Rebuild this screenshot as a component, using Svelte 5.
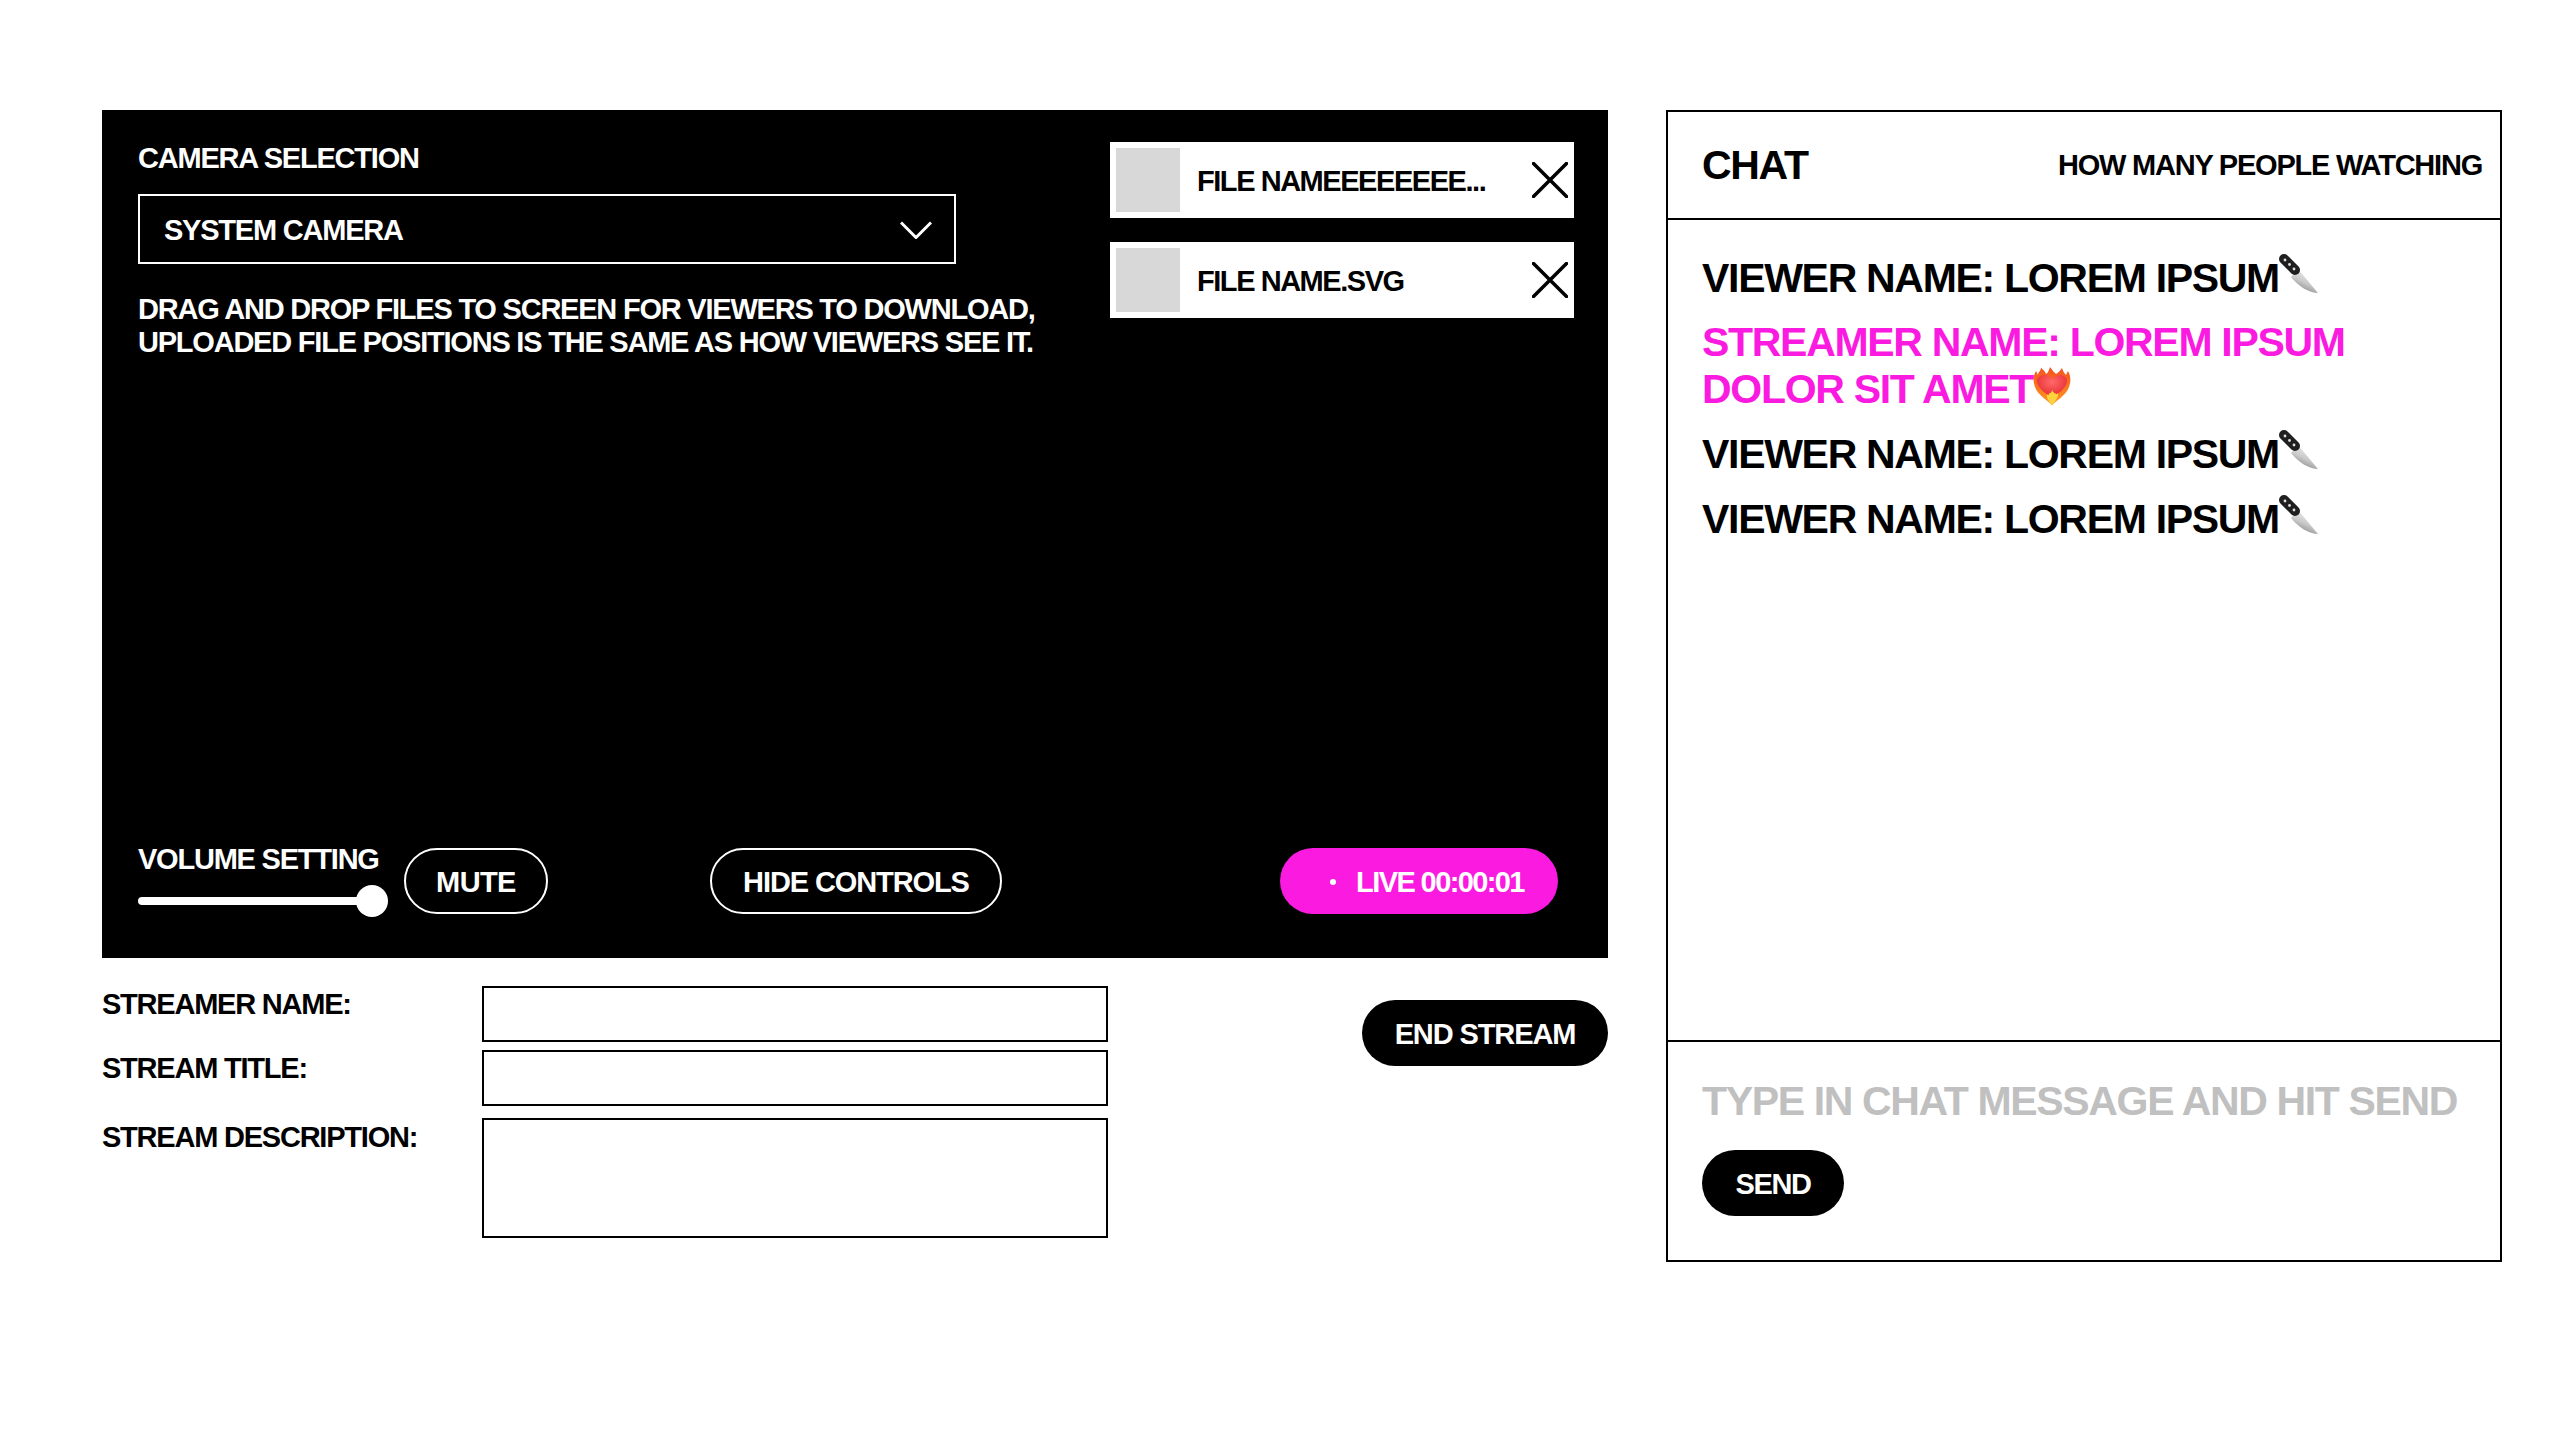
<script>
  const messages = [
    { name: 'VIEWER NAME', text: 'LOREM IPSUM', emoji: 'knife' },
    { name: 'STREAMER NAME', text: 'LOREM IPSUM DOLOR SIT AMET', emoji: 'heart', streamer: true },
    { name: 'VIEWER NAME', text: 'LOREM IPSUM', emoji: 'knife' },
    { name: 'VIEWER NAME', text: 'LOREM IPSUM', emoji: 'knife' }
  ];
  const files = ['FILE NAMEEEEEEEE...', 'FILE NAME.SVG'];
</script>

<div class="page">
  <div class="left">
    <section class="stage">
      <div class="top">
        <div class="camera">
          <div class="label">CAMERA SELECTION</div>
          <div class="select">
            <span>SYSTEM CAMERA</span>
            <svg class="chevron" width="32" height="18" viewBox="0 0 32 18">
              <path d="M1 1.5 16 16.5 31 1.5" fill="none" stroke="#fff" stroke-width="3" />
            </svg>
          </div>
          <p class="hint">
            DRAG AND DROP FILES TO SCREEN FOR VIEWERS TO DOWNLOAD,<br />
            UPLOADED FILE POSITIONS IS THE SAME AS HOW VIEWERS SEE IT.
          </p>
        </div>
        <ul class="files">
          {#each files as file}
            <li class="file">
              <div class="thumb"></div>
              <span class="file-name">{file}</span>
              <svg class="close" width="36" height="36" viewBox="0 0 36 36">
                <path d="M1.5 1.5 34.5 34.5M34.5 1.5 1.5 34.5" stroke="#000" stroke-width="3.5" stroke-linecap="round" />
              </svg>
            </li>
          {/each}
        </ul>
      </div>

      <div class="controls">
        <div class="volume">
          <div class="label">VOLUME SETTING</div>
          <div class="slider"><div class="knob"></div></div>
        </div>
        <button class="pill outline mute">MUTE</button>
        <button class="pill outline hide">HIDE CONTROLS</button>
        <button class="pill live"><i class="dot"></i>LIVE 00:00:01</button>
      </div>
    </section>

    <div class="details">
      <div class="form">
        <label for="streamer">STREAMER NAME:</label>
        <input id="streamer" />
        <label for="title">STREAM TITLE:</label>
        <input id="title" />
        <label class="tall" for="description">STREAM DESCRIPTION:</label>
        <textarea id="description"></textarea>
      </div>
      <button class="pill solid end">END STREAM</button>
    </div>
  </div>

  <aside class="chat">
    <header class="chat-head">
      <h2>CHAT</h2>
      <span class="watching">HOW MANY PEOPLE WATCHING</span>
    </header>
    <div class="messages">
      {#each messages as m}
        <p class="message" class:streamer={m.streamer}>
          {m.name}: {m.text}{#if m.emoji === 'knife'}<svg class="emoji knife" width="40" height="40" viewBox="0 0 40 40">
              <defs>
                <linearGradient id="blade" x1="0.7" y1="0.1" x2="0.3" y2="0.9">
                  <stop offset="0" stop-color="#f0f0f0" />
                  <stop offset="0.55" stop-color="#c9c9c9" />
                  <stop offset="1" stop-color="#8d8d8d" />
                </linearGradient>
              </defs>
              <path d="M12 23 19 15 39 39C30 39 19 32 12 23Z" fill="url(#blade)" />
              <path d="M5 5 16 16" stroke="#1f1f1f" stroke-width="10" stroke-linecap="round" />
              <circle cx="6" cy="6" r="1.4" fill="#ddd" />
              <circle cx="10.5" cy="10.5" r="1.4" fill="#ddd" />
              <circle cx="15" cy="15" r="1.4" fill="#ddd" />
            </svg>{:else}<svg class="emoji heart" width="38" height="40" viewBox="0 0 38 40">
              <defs>
                <linearGradient id="flame" x1="0" y1="0" x2="0" y2="1">
                  <stop offset="0" stop-color="#f4511e" />
                  <stop offset="1" stop-color="#ff9a1f" />
                </linearGradient>
                <radialGradient id="love" cx="0.5" cy="0.3" r="0.7">
                  <stop offset="0" stop-color="#ff6a6a" />
                  <stop offset="1" stop-color="#e5262c" />
                </radialGradient>
              </defs>
              <path d="M19 39.5C16 35 5 30 2 21 0 15 0 10 3 5L5 9C5 6 8 5 8 1.5 10 4 12 5 13 8 15 7 16 4 17 1 19 4 21 6 23 8 25 7 27 5 29 2 30 5 31 7 33 9L35 5C38 10 38 16 36 21 33 30 22 35 19 39.5Z" fill="url(#flame)" />
              <path d="M19 32C14 28 5 23 4 16 3 11 8 9 12 9 15 9 18 11 19 13 20 11 23 9 26 9 30 9 35 11 34 16 33 23 24 28 19 32Z" fill="url(#love)" />
              <path d="M19 39.5C17 36 13 33 14 28 15 30 16 29 16 27 18 28 19 25 19 24 20 26 22 28 22 27 24 29 24 28 25 27 26 32 21 36 19 39.5Z" fill="#ffd23f" />
            </svg>{/if}
        </p>
      {/each}
    </div>
    <div class="composer">
      <div class="placeholder">TYPE IN CHAT MESSAGE AND HIT SEND</div>
      <button class="pill solid send">SEND</button>
    </div>
  </aside>
</div>

<style>
  :global(body) {
    background: #fff;
    color: #000;
    font-family: "Liberation Sans", Arial, sans-serif;
    font-weight: 700;
  }

  .page {
    display: flex;
    align-items: flex-start;
    gap: 58px;
    padding: 110px 0 0 102px;
    font-size: 29px;
    letter-spacing: -1.22px;
  }

  .left {
    width: 1506px;
  }

  .stage {
    display: flex;
    flex-direction: column;
    justify-content: space-between;
    box-sizing: border-box;
    height: 848px;
    padding: 32px 50px 44px 36px;
    background: #000;
    color: #fff;
  }

  .top {
    display: flex;
    justify-content: space-between;
  }

  .label {
    line-height: 33px;
  }

  .select {
    display: flex;
    align-items: center;
    justify-content: space-between;
    box-sizing: border-box;
    width: 818px;
    height: 70px;
    margin-top: 19px;
    padding: 2px 22px 0 24px;
    border: 2px solid #fff;
  }

  .hint {
    margin: 29px 0 0;
    line-height: 33px;
    white-space: nowrap;
  }

  .files {
    display: flex;
    flex-direction: column;
    gap: 24px;
    width: 464px;
    margin: 0 -16px 0 0;
    padding: 0;
    list-style: none;
  }

  .file {
    display: flex;
    align-items: center;
    height: 76px;
    padding: 0 6px;
    background: #fff;
    color: #000;
  }

  .thumb {
    width: 64px;
    height: 64px;
    background: #d8d8d8;
  }

  .file-name {
    flex: 1;
    margin-left: 17px;
    padding-top: 2px;
    letter-spacing: -1.45px;
  }

  .controls {
    display: flex;
    align-items: flex-start;
  }

  .volume {
    width: 266px;
  }

  .volume .label {
    margin-top: -5px;
  }

  .slider {
    position: relative;
    width: 234px;
    height: 8px;
    margin-top: 21px;
    border-radius: 4px;
    background: #fff;
  }

  .knob {
    position: absolute;
    top: -12px;
    right: -16px;
    width: 32px;
    height: 32px;
    border-radius: 50%;
    background: #fff;
  }

  .pill {
    display: flex;
    align-items: center;
    justify-content: center;
    box-sizing: border-box;
    height: 66px;
    padding: 2px 0 0;
    border: 2px solid transparent;
    border-radius: 33px;
    font: inherit;
    letter-spacing: -1.1px;
    color: #fff;
  }

  .outline {
    border-color: #fff;
    background: #000;
  }

  .mute {
    width: 144px;
    letter-spacing: -0.6px;
  }

  .hide {
    width: 292px;
    margin-left: 162px;
  }

  .live {
    width: 278px;
    margin-left: 278px;
    padding-left: 16px;
    background: #fa1ae0;
    letter-spacing: -1.6px;
  }

  .dot {
    width: 6px;
    height: 6px;
    margin-right: 20px;
    border-radius: 50%;
    background: #fff;
  }

  .solid {
    background: #000;
  }

  .details {
    display: flex;
    justify-content: space-between;
    align-items: flex-start;
    margin-top: 28px;
  }

  .form {
    display: grid;
    grid-template-columns: 380px 626px;
    row-gap: 8px;
  }

  .form label {
    padding-top: 1px;
    line-height: 34px;
  }

  .form label.tall {
    padding-top: 6px;
  }

  input, textarea {
    display: block;
    box-sizing: border-box;
    width: 100%;
    height: 56px;
    margin: 0;
    padding: 0;
    border: 2px solid #000;
    border-radius: 0;
    background: #fff;
    resize: none;
  }

  textarea {
    height: 120px;
    margin-top: 4px;
  }

  .end {
    width: 246px;
    margin-top: 14px;
  }

  .chat {
    display: flex;
    flex-direction: column;
    box-sizing: border-box;
    width: 836px;
    height: 1152px;
    border: 2px solid #000;
  }

  .chat-head {
    display: flex;
    align-items: center;
    justify-content: space-between;
    box-sizing: border-box;
    height: 108px;
    padding: 0 18px 0 34px;
    border-bottom: 2px solid #000;
  }

  h2 {
    margin: 0;
    font-size: 41px;
    letter-spacing: -1.3px;
  }

  .messages {
    flex: 1;
    padding: 34px 34px 0;
    font-size: 41px;
    letter-spacing: -1.3px;
  }

  .message {
    width: 680px;
    margin: 0 0 17px;
    line-height: 47px;
  }

  .streamer {
    color: #fa1ae0;
  }

  .emoji {
    vertical-align: -2px;
  }

  .heart {
    vertical-align: -3px;
  }

  .composer {
    box-sizing: border-box;
    height: 220px;
    padding: 36px 34px 0;
    border-top: 2px solid #000;
  }

  .placeholder {
    font-size: 41px;
    line-height: 47px;
    letter-spacing: -1.35px;
    white-space: nowrap;
    color: #c0c0c0;
  }

  .send {
    width: 142px;
    margin-top: 25px;
    letter-spacing: -1.4px;
  }
</style>
